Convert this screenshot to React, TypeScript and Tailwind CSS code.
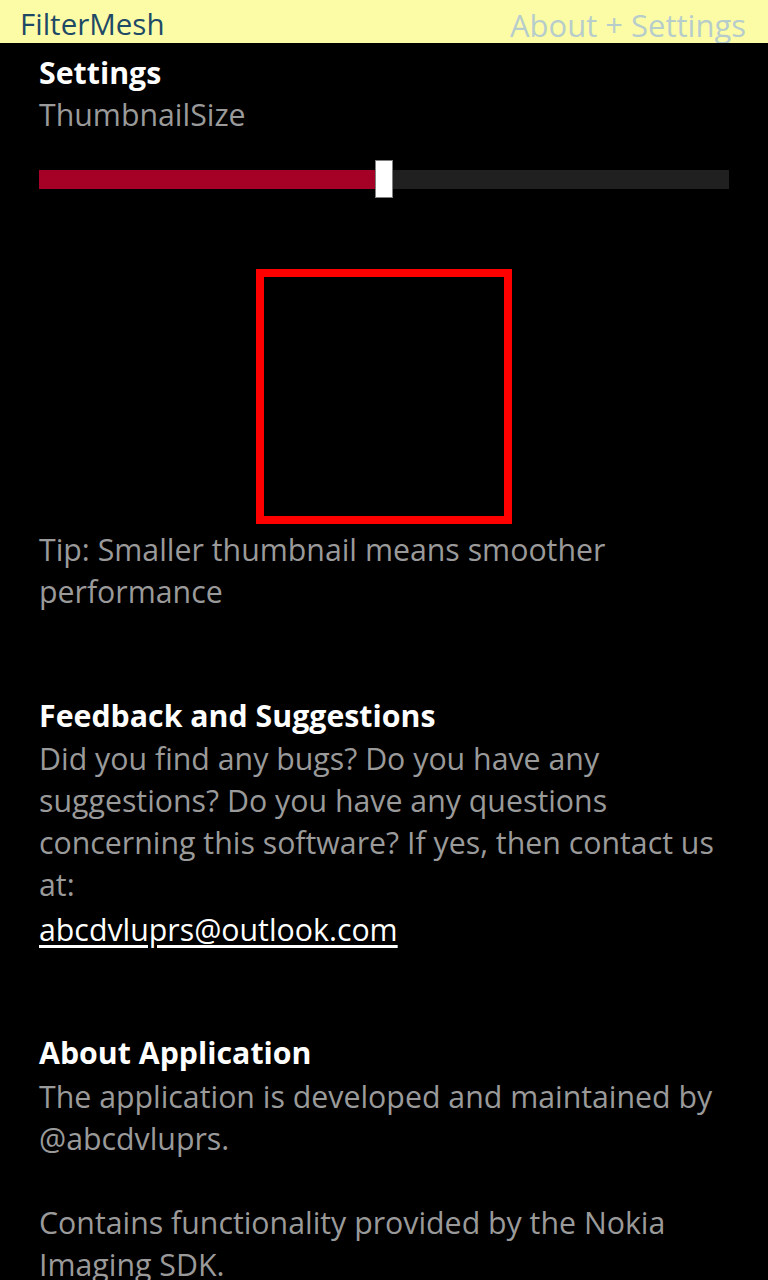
const font = { fontFamily: '"Open Sans", "Noto Sans", sans-serif' };

function Slider({ value }: { value: number }) {
  return (
    <div className="relative h-[38px] flex items-center">
      <div className="flex h-[19px] w-full">
        <div className="h-full bg-[#a50025]" style={{ width: `${value}%` }} />
        <div className="h-full flex-1 bg-[#202020]" />
      </div>
      <div
        className="absolute top-0 h-[38px] w-[18px] bg-white border border-[#808080]"
        style={{ left: `${value}%` }}
      />
    </div>
  );
}

export default function App() {
  return (
    <div className="w-[768px] h-[1280px] overflow-hidden bg-black" style={font}>
      <header className="h-[43px] bg-[#fdfca6] flex items-center justify-between pl-[20px] pr-[22px] overflow-hidden">
        <span className="text-[29.5px] leading-[42px] text-[#1e4a66] mt-[4px]">FilterMesh</span>
        <span className="text-[31px] leading-[42px] text-[#b7cdcc] mt-[6px]">About + Settings</span>
      </header>

      <main className="px-[39px] pt-[9px] text-[30.3px] leading-[42px] text-[#9a9a9a]">
        <h2 className="font-bold text-white">Settings</h2>
        <p>ThumbnailSize</p>

        <div className="mt-[24px]">
          <Slider value={48.7} />
        </div>

        <div className="flex justify-center mt-[71px]">
          <div className="w-[256px] h-[255px] border-[8px] border-[#ff0000]" />
        </div>

        <p className="mt-[5px]">
          Tip: Smaller thumbnail means smoother
          <br />
          performance
        </p>

        <h2 className="mt-[82px] font-bold text-white">Feedback and Suggestions</h2>
        <p className="mt-[1px]">
          Did you find any bugs? Do you have any
          <br />
          suggestions? Do you have any questions
          <br />
          concerning this software? If yes, then contact us
          <br />
          at:
        </p>
        <a href="#" className="block text-white underline leading-[48px] underline-offset-[4px]">
          abcdvluprs@outlook.com
        </a>

        <h2 className="mt-[78px] font-bold text-white">About Application</h2>
        <p className="mt-[2px]">
          The application is developed and maintained by
          <br />
          @abcdvluprs.
        </p>
        <p className="mt-[42px]">
          Contains functionality provided by the Nokia
          <br />
          Imaging SDK.
        </p>
      </main>
    </div>
  );
}
